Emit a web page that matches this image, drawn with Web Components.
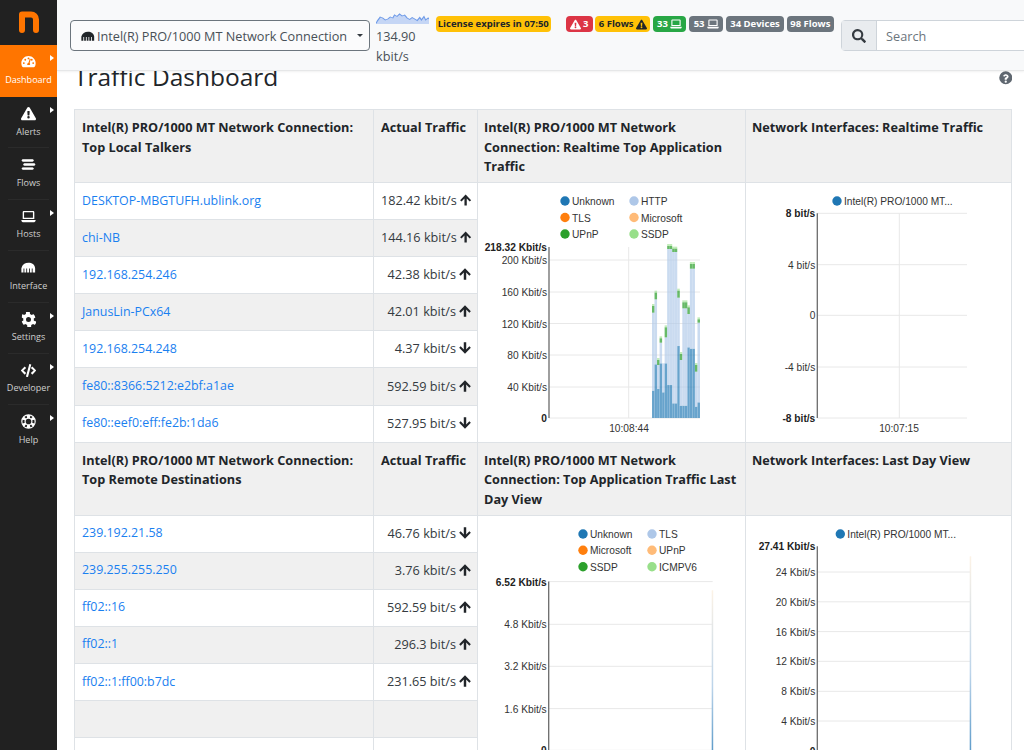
<!DOCTYPE html>
<html>
<head>
<meta charset="utf-8">
<title>Traffic Dashboard</title>
<style>
html, body { margin: 0; height: 100%; overflow: hidden; background: #fff; }
body { font-family: "Open Sans", "Liberation Sans", sans-serif; color: #212529; }
app-shell { height: 750px; }
</style>
</head>
<body>
<app-shell>
  <side-bar slot="side">
    <side-item icon="gauge" label="Dashboard" active arrow></side-item>
    <side-item icon="warn" label="Alerts" arrow></side-item>
    <side-item icon="bars" label="Flows"></side-item>
    <side-item icon="laptop" label="Hosts" arrow></side-item>
    <side-item icon="eth" label="Interface"></side-item>
    <side-item icon="cog" label="Settings" arrow></side-item>
    <side-item icon="code" label="Developer" arrow></side-item>
    <side-item icon="ring" label="Help" arrow></side-item>
  </side-bar>
  <top-bar slot="top"></top-bar>
  <page-title>Traffic Dashboard</page-title>
  <dash-section
    h1="Intel(R) PRO/1000 MT Network Connection: Top Local Talkers"
    h3="Intel(R) PRO/1000 MT Network Connection: Realtime Top Application Traffic"
    h4="Network Interfaces: Realtime Traffic"
    rows="DESKTOP-MBGTUFH.ublink.org|182.42 kbit/s|up;chi-NB|144.16 kbit/s|up;192.168.254.246|42.38 kbit/s|up;JanusLin-PCx64|42.01 kbit/s|up;192.168.254.248|4.37 kbit/s|down;fe80::8366:5212:e2bf:a1ae|592.59 bit/s|up;fe80::eef0:eff:fe2b:1da6|527.95 bit/s|down"
    charts="realtime-apps,realtime-if"></dash-section>
  <dash-section
    h1="Intel(R) PRO/1000 MT Network Connection: Top Remote Destinations"
    h3="Intel(R) PRO/1000 MT Network Connection: Top Application Traffic Last Day View"
    h4="Network Interfaces: Last Day View"
    rows="239.192.21.58|46.76 kbit/s|down;239.255.255.250|3.76 kbit/s|up;ff02::16|592.59 bit/s|up;ff02::1|296.3 bit/s|up;ff02::1:ff00:b7dc|231.65 bit/s|up;||;||"
    charts="day-apps,day-if"></dash-section>
</app-shell>

<script>
// font awesome style glyphs, drawn on a 24 box
const ICONS = {
  gauge: '<path fill-rule="evenodd" d="M12 3C5.6 3 .5 8.2.5 14.6c0 2.2.6 4.2 1.6 5.9.3.4.7.7 1.2.7h17.4c.5 0 .9-.3 1.2-.7 1-1.7 1.6-3.7 1.6-5.900C23.500 8.200 18.400 3 12 3zM4.500 16a1.500 1.500 0 1 1 0-3 1.500 1.500 0 0 1 0 3zm2.300-5.300a1.500 1.500 0 1 1 0-3 1.500 1.500 0 0 1 0 3zM12 5.500a1.500 1.500 0 1 1 0 3 1.500 1.500 0 0 1 0-3zm2 12.200h-4c-.3-2 .6-3.500 2-3.900l1.700-5.600c.2-.6.700-.8 1.200-.7.500.2.800.700.600 1.200l-1.700 5.500c1 1 1.200 2.200.2 3.500zm3.200-7a1.500 1.500 0 1 1 0-3 1.500 1.500 0 0 1 0 3zm2.300 5.300a1.500 1.500 0 1 1 0-3 1.500 1.500 0 0 1 0 3z"/>',
  warn: '<path fill-rule="evenodd" d="M23.700 19.600 13.800 2.500c-.8-1.400-2.800-1.400-3.600 0L.3 19.600C-.5 21 .5 22.700 2.100 22.700h19.800c1.600 0 2.600-1.700 1.800-3.100zM12 16a2 2 0 1 1 0 4 2 2 0 0 1 0-4zm-1.900-7.300c0-.4.300-.7.700-.7h2.400c.4 0 .7.300.7.700l-.4 5.700c0 .3-.3.600-.6.600h-1.800c-.3 0-.6-.3-.6-.6z"/>',
  bars: '<path d="M3 4h15.500c.8 0 1.500.7 1.500 1.500S19.300 7 18.500 7H3c-.8 0-1.500-.7-1.500-1.500S2.200 4 3 4zM5.500 10.500H21c.8 0 1.500.7 1.500 1.500s-.7 1.500-1.500 1.500H5.500C4.700 13.500 4 12.800 4 12s.7-1.500 1.500-1.500zM3 17h15.500c.8 0 1.500.7 1.500 1.500S19.300 20 18.500 20H3c-.8 0-1.500-.7-1.500-1.500S2.200 17 3 17z" stroke="currentColor" stroke-width=".9"/>',
  laptop: '<path fill-rule="evenodd" d="M4.500 3h15c1 0 1.800.8 1.800 1.800V16H2.700V4.800C2.700 3.800 3.500 3 4.500 3zm.4 2.200v8.600h14.200V5.200zM.6 17.500h22.800v1c0 1.400-1.100 2.500-2.500 2.500H3.100C1.700 21 .6 19.900.6 18.500z"/>',
  eth: '<path d="M12 4.500C6.500 4.500 2 7.500 .6 13V20H4V13.500h1.400V20h3V13.500h1.400V20h3V13.500h1.400V20h3V13.500h1.400V20h4V13C22 7.500 17.500 4.500 12 4.500z"/>',
  cog: '<path fill-rule="evenodd" d="M22.500 14.900 20.400 13.700a9.500 9.500 0 0 0 0-3.400l2.100-1.200c.3-.1.400-.4.300-.7a12.400 12.400 0 0 0-2.700-4.700c-.2-.2-.5-.3-.7-.1l-2.100 1.200a9.400 9.400 0 0 0-3-1.700V.7c0-.3-.2-.5-.5-.6a12.500 12.500 0 0 0-5.400 0c-.3.100-.5.300-.5.600v2.400a9.600 9.600 0 0 0-3 1.700L2.800 3.600c-.2-.2-.5-.1-.7.100A12.400 12.400 0 0 0 1.400 8.400c-.1.3 0 .6.300.7l2.100 1.200a9.500 9.500 0 0 0 0 3.400l-2.100 1.200c-.3.100-.4.400-.3.700a12.400 12.400 0 0 0 2.700 4.700c.2.200.5.300.7.100l2.100-1.200a9.400 9.400 0 0 0 3 1.700v2.400c0 .3.200.5.500.6 1.800.4 3.600.4 5.400 0 .3-.1.500-.3.500-.6v-2.400a9.600 9.600 0 0 0 3-1.700l2.100 1.200c.2.200.5.100.7-.1a12.400 12.400 0 0 0 2.700-4.700c.1-.3 0-.6-.3-.7zM12 16a4 4 0 1 1 0-8 4 4 0 0 1 0 8z"/>',
  code: '<path d="M10.600 22.500 8.300 21.800a.5.500 0 0 1-.3-.6L13.200 2c.1-.3.400-.4.600-.3l2.300.6c.3.100.4.400.3.600l-5.200 19.300c-.1.300-.4.400-.6.300zM6.200 18.200l1.700-1.800c.2-.2.200-.5 0-.7L3.800 12l4.100-3.700c.2-.2.200-.5 0-.7L6.200 5.800a.5.500 0 0 0-.7 0L0 11.600c-.2.200-.2.600 0 .8l5.500 5.800c.2.200.5.200.7 0zm12.300 0 5.500-5.800c.2-.2.200-.6 0-.8l-5.500-5.800a.5.500 0 0 0-.7 0l-1.700 1.800c-.2.200-.2.500 0 .7l4.100 3.700-4.100 3.700c-.2.200-.2.500 0 .7l1.700 1.800c.2.200.5.200.7 0z"/>',
  ring: '<path fill-rule="evenodd" d="M12 .4a11.600 11.600 0 1 0 0 23.200A11.600 11.600 0 0 0 12 .4zm6.500 4.200-2.500 2.500a6 6 0 0 0-1.900-1.100l.9-3.300c1.300.4 2.500 1.100 3.500 1.900zM12 7.500a4.500 4.500 0 1 1 0 9 4.500 4.500 0 0 1 0-9zM9 2.700l.9 3.300A6 6 0 0 0 8 7.100L5.500 4.600C6.500 3.800 7.700 3.100 9 2.700zM2.700 9l3.300.9a6 6 0 0 0 0 4.200L2.700 15a10 10 0 0 1 0-6zm2.800 10.400L8 16.900a6 6 0 0 0 1.900 1.100L9 21.300c-1.300-.4-2.500-1.100-3.500-1.900zm9.500 1.900-.9-3.300a6 6 0 0 0 1.900-1.100l2.500 2.500c-1 .8-2.200 1.500-3.500 1.900zm6.300-6.300-3.300-.9a6 6 0 0 0 0-4.200l3.300-.9a10 10 0 0 1 0 6z"/>',
  up: '<path d="M12 2 2 12.400l2.600 2.500 5.300-5.500V22h4.200V9.400l5.300 5.500 2.600-2.500z"/>',
  down: '<path d="M12 22 2 11.600l2.600-2.500 5.300 5.500V2h4.200v12.600l5.300-5.500 2.600 2.500z"/>',
  search: '<path fill-rule="evenodd" d="M23.600 20.700l-4.700-4.700a1.100 1.100 0 0 0-.8-.3h-.8a9.700 9.700 0 1 0-1.700 1.700v.8c0 .3.100.6.300.8l4.700 4.700c.4.400 1.100.4 1.600 0l1.300-1.300c.5-.5.500-1.200.1-1.700zM9.800 15.700a6 6 0 1 1 0-12 6 6 0 0 1 0 12z"/>',
  help: '<path fill-rule="evenodd" d="M12 .4a11.600 11.600 0 1 0 0 23.200A11.600 11.600 0 0 0 12 .4zm0 20.600a2 2 0 1 1 0-4 2 2 0 0 1 0 4zm1.900-6.400v.3c0 .3-.3.600-.6.600h-2.600c-.3 0-.6-.3-.6-.6v-.5c0-1.800 1.300-2.500 2.300-3.100.9-.5 1.400-.8 1.400-1.400 0-.8-1-1.300-1.800-1.300-1 0-1.500.5-2.200 1.300-.2.300-.6.300-.8.100L7.700 9.100c-.2-.2-.3-.5-.1-.8C8.700 6.700 10.100 5.700 12.300 5.700c2.300 0 4.800 1.800 4.800 4.100 0 3.100-3.200 3.200-3.200 4.800z"/>'
};
const icon = (name, size, extra = '') =>
  `<svg width="${size}" height="${size}" viewBox="0 0 24 24" fill="currentColor" ${extra}>${ICONS[name]}</svg>`;

class AppShell extends HTMLElement {
  constructor() {
    super();
    this.attachShadow({mode: "open"}).innerHTML = `
    <style>
      :host { display: grid; grid-template-columns: 57px minmax(0, 1fr); grid-template-rows: 71px 1fr; overflow: hidden; }
      .side { grid-row: 1 / 3; display: block; }
      .top { position: relative; z-index: 2; min-width: 0; overflow: hidden; padding-bottom: 3px; margin-bottom: -3px; }
      main { padding: 0 12px 0 17px; overflow: hidden; min-width: 0; }
    </style>
    <div class="side"><slot name="side"></slot></div>
    <div class="top"><slot name="top"></slot></div>
    <main><slot></slot></main>`;
  }
}

class SideBar extends HTMLElement {
  constructor() {
    super();
    this.attachShadow({mode: "open"}).innerHTML = `
    <style>
      :host { display: block; height: 750px; background: #212121; }
      .logo { height: 45px; display: flex; align-items: flex-start; justify-content: center; padding-top: 11px; box-sizing: border-box; }
    </style>
    <div class="logo">
      <svg width="20" height="22" viewBox="0 0 20 22"><path d="M3 19V3.500h9a5 5 0 0 1 5 5V19" fill="none" stroke="#ff7500" stroke-width="6" stroke-linecap="round" stroke-linejoin="round"/></svg>
    </div>
    <slot></slot>`;
  }
}

class SideItem extends HTMLElement {
  connectedCallback() {
    if (this.shadowRoot) return;
    const on = this.hasAttribute("active");
    this.attachShadow({mode: "open"}).innerHTML = `
    <style>
      :host { display: block; }
      :host(:last-child) a::after { display: none; }
      a { position: relative; display: flex; flex-direction: column; align-items: center; height: ${on ? 52 : 51.4}px; box-sizing: border-box; padding-top: 9px;
          background: ${on ? "#ff7500" : "transparent"}; color: #fff; }
      span { font: 9.050px/14px "Open Sans", sans-serif; color: ${on ? "#fff" : "#cfcfcf"}; margin-top: 3.500px; white-space: nowrap; }
      svg { display: block; }
      i { position: absolute; left: 50px; top: 10px; border-left: 4px solid #fff; border-top: 3.500px solid transparent; border-bottom: 3.500px solid transparent; }
      a::after { content: ""; position: absolute; left: 8px; right: 8px; bottom: 0; height: 1px; background: ${on ? "transparent" : "#2b2b2b"}; }
    </style>
    <a>${icon(this.getAttribute("icon"), 15)}<span>${this.getAttribute("label")}</span>${this.hasAttribute("arrow") ? "<i></i>" : ""}</a>`;
  }
}

class StatusBadge extends HTMLElement {
  constructor() {
    super();
    this.attachShadow({mode: "open"}).innerHTML = `
    <style>
      :host { display: inline-flex; align-items: center; justify-content: center; gap: 2px; height: 16px; border-radius: 4px; box-sizing: border-box;
        font: 700 9.500px/16px "Open Sans", sans-serif; white-space: nowrap;
        background: var(--bg, #6c757d); color: var(--fg, #fff); }
    </style><slot></slot>`;
  }
}

class TopBar extends HTMLElement {
  constructor() {
    super();
    const spark = "M0 23 L2 17 L5 10 L8 12 L11 16 L14 14 L17 10 L20 12 L22 6 L25 9 L28 4 L31 8 L34 6 L37 12 L40 15 L43 11 L46 14 L49 17 L52 11 L54 16 L57 9 L59 16 L62 12 L63 14";
    this.attachShadow({mode: "open"}).innerHTML = `
    <style>
      :host { display: flex; align-items: flex-start; height: 71px; box-sizing: border-box; background: #f8f9fa; border-bottom: 1px solid #e6e7e8; box-shadow: 0 1px 2px rgba(0,0,0,.06); padding-left: 13px; }
      .picker { margin-top: 20px; flex: none; width: 300px; height: 31px; box-sizing: border-box; border: 1px solid #6c757d; border-radius: 4px; background: #fbfbfc; display: flex; align-items: center; padding-left: 10px; gap: 2px; font-size: 12.700px; color: #495057; white-space: nowrap; }
      .picker svg { color: #212529; flex: none; }
      .caret { margin-left: 8px; border-top: 3.500px solid #343a40; border-left: 3.500px solid transparent; border-right: 3.500px solid transparent; }
      .rate { margin-left: 6px; flex: none; width: 59.500px; font-size: 12.700px; line-height: 20px; color: #495057; }
      .rate svg { display: block; margin-top: 12px; margin-bottom: 2px; }
      .badges { margin: 16px 0 0 0; display: flex; gap: 2.600px; flex: none; }
      .gap { margin-left: 12px; }
      .search { margin: 20px 0 0 7px; flex: none; display: flex; height: 31px; width: 240px; box-sizing: border-box; border: 1px solid #ced4da; border-radius: 4px; background: #fff; }
      .search b { width: 34px; background: #e9ecef; border-right: 1px solid #ced4da; display: flex; align-items: center; justify-content: center; color: #343a40; }
      .search span { padding-left: 9px; line-height: 30px; font-size: 12.700px; color: #6c757d; }
    </style>
    <div class="picker">${icon("eth", 14)}<span>Intel(R) PRO/1000 MT Network Connection</span><span class="caret"></span></div>
    <div class="rate">
      <svg width="53" height="12" viewBox="0 0 63 24" preserveAspectRatio="none"><path d="${spark} L63 24 L0 24 Z" fill="#c5d6f5"/><path d="${spark}" fill="none" stroke="#6f9be8" stroke-width="1.500"/></svg>
      134.90<br>kbit/s
    </div>
    <div class="badges">
      <status-badge style="--bg:#ffc107;--fg:#212529;width:115.500px">License expires in 07:50</status-badge>
      <status-badge class="gap" style="--bg:#dc3545;width:27px">${icon("warn", 11)}3</status-badge>
      <status-badge style="--bg:#ffc107;--fg:#212529;width:55px">6 Flows ${icon("warn", 11)}</status-badge>
      <status-badge style="--bg:#28a745;width:33.500px">33 ${icon("laptop", 12)}</status-badge>
      <status-badge style="width:34.500px">53 ${icon("laptop", 12)}</status-badge>
      <status-badge style="width:58px">34 Devices</status-badge>
      <status-badge style="width:47.500px">98 Flows</status-badge>
    </div>
    <div class="search"><b>${icon("search", 14)}</b><span>Search</span></div>`;
  }
}

class PageTitle extends HTMLElement {
  constructor() {
    super();
    this.attachShadow({mode: "open"}).innerHTML = `
    <style>
      :host { display: flex; justify-content: space-between; align-items: center; height: 38px; margin-top: -13px; padding-bottom: 13px; }
      h2 { margin: 0; font: 400 24.500px/38px "Open Sans", sans-serif; color: #212529; }
      svg { color: #5f6770; margin-top: 2px; }
    </style>
    <h2><slot></slot></h2>${icon("help", 13.500)}`;
  }
}

class DashSection extends HTMLElement {
  connectedCallback() {
    if (this.shadowRoot) return;
    const rows = this.getAttribute("rows").split(";").map(r => r.split("|"));
    const charts = this.getAttribute("charts").split(",");
    const cells = rows.map((r, i) => `
      <div class="c1 ${i % 2 ? "alt" : ""}" style="grid-row:${i + 2}"><a>${r[0] || "&nbsp;"}</a></div>
      <div class="c2 ${i % 2 ? "alt" : ""}" style="grid-row:${i + 2}">${r[1] ? r[1] + icon(r[2], 14) : "&nbsp;"}</div>`).join("");
    this.attachShadow({mode: "open"}).innerHTML = `
    <style>
      :host { display: grid; grid-template-columns: 299px 104px 268px 267px; grid-template-rows: 73px repeat(7, 37.100px); font-size: 12.700px; color: #212529; }
      div { box-sizing: border-box; border-top: 1px solid #dee2e6; border-left: 1px solid #dee2e6; }
      .h { background: #f0f0f0; font-weight: 700; line-height: 19.500px; padding: 8px 7px 0; font-size: 12.700px; white-space: normal; }
      .h3 { padding-left: 6px; padding-right: 4px; }
      .c1, .c2 { padding: 0 7px 2px; display: flex; align-items: center; white-space: nowrap; }
      .c1 { grid-column: 1; font-size: 12.400px; }
      .c2 { grid-column: 2; justify-content: flex-end; gap: 2px; color: #343a40; padding-right: 5px; }
      .c2 svg { color: #212529; }
      .alt { background: #f0f0f0; }
      a { color: #1a80f0; }
      .chart { grid-row: 2 / 9; padding: 0; overflow: hidden; }
      .last { border-right: 1px solid #dee2e6; }
    </style>
    <div class="h">${this.getAttribute("h1")}</div>
    <div class="h">Actual Traffic</div>
    <div class="h h3">${this.getAttribute("h3")}</div>
    <div class="h h3 last">${this.getAttribute("h4")}</div>
    ${cells}
    <div class="chart" style="grid-column:3"><traffic-chart kind="${charts[0]}"></traffic-chart></div>
    <div class="chart last" style="grid-column:4"><traffic-chart kind="${charts[1]}"></traffic-chart></div>`;
  }
}

// chart geometry is kept in page coords, the viewBox maps it on to the cell
const PAL = ["#1f77b4", "#aec7e8", "#ff7f0e", "#ffbb78", "#2ca02c", "#98df8a"];
const CHARTS = {
  "realtime-apps": {
    box: [478, 183], legend: [[565, 201, "Unknown", 0], [634, 201, "HTTP", 1], [565, 217.500, "TLS", 2], [634, 217.500, "Microsoft", 3], [565, 234, "UPnP", 4], [634, 234, "SSDP", 5]],
    axisX: 549, right: 700, top: 247,
    ticks: [[247, "218.32 Kbit/s", 1, 1], [260, "200 Kbit/s"], [292, "160 Kbit/s"], [323.500, "120 Kbit/s"], [355, "80 Kbit/s"], [387, "40 Kbit/s"], [418, "0", 1]],
    vx: 628.700, time: "10:08:44", timeX: 629
  },
  "realtime-if": {
    box: [746, 183], legend: [[837, 201, "Intel(R) PRO/1000 MT...", 0]],
    axisX: 817.300, right: 967, top: 213.300,
    ticks: [[213.300, "8 bit/s", 1], [264.700, "4 bit/s"], [315.300, "0"], [367, "-4 bit/s"], [418, "-8 bit/s", 1]],
    vx: 899.300, time: "10:07:15", timeX: 899
  },
  "day-apps": {
    box: [478, 515.700], legend: [[583, 533.700, "Unknown", 0], [652, 533.700, "TLS", 1], [583, 550, "Microsoft", 2], [652, 550, "UPnP", 3], [583, 566.500, "SSDP", 4], [652, 566.500, "ICMPV6", 5]],
    axisX: 548.700, right: 712.700, top: 581.300,
    ticks: [[581.300, "6.52 Kbit/s", 1], [624, "4.8 Kbit/s"], [666, "3.2 Kbit/s"], [708.300, "1.6 Kbit/s"], [750, "0", 1]],
    edge: [590, 750]
  },
  "day-if": {
    box: [746, 515.700], legend: [[840.300, 533.700, "Intel(R) PRO/1000 MT...", 0]],
    axisX: 817.300, right: 970.700, top: 546,
    ticks: [[546, "27.41 Kbit/s", 1, 1], [571.700, "24 Kbit/s"], [601.500, "20 Kbit/s"], [631.300, "16 Kbit/s"], [661, "12 Kbit/s"], [691, "8 Kbit/s"], [720.700, "4 Kbit/s"], [750.700, "0", 1]],
    edge: [556, 750]
  }
};
// blue top, band top, band bottom in the 530,240 crop at 3x
const BARS = [[452,198,218],[373,158,178],[447,360,375],[370,295,308],[457,370,370],[370,262,292],[435,18,27],[435,18,27],[490,26,36],[490,26,36],[318,152,173],[497,342,360],[497,187,205],[497,187,205],[322,202,222],[326,72,86],[326,72,86],[500,375,395],[487,238,248]];

class TrafficChart extends HTMLElement {
  connectedCallback() {
    if (this.shadowRoot) return;
    const id = this.getAttribute("kind"), c = CHARTS[id];
    let s = "";
    c.legend.forEach(l => {
      s += `<circle cx="${l[0]}" cy="${l[1]}" r="4.700" fill="${PAL[l[3]]}"/><text x="${l[0] + 7}" y="${l[1] + 4}">${l[2]}</text>`;
    });
    c.ticks.forEach(t => {
      const y = t[0];
      if (!t[3]) s += `<line x1="${c.axisX}" x2="${c.right}" y1="${y}" y2="${y}" stroke="#e8e8e8"/>`;
      s += `<text x="${c.axisX - 2}" y="${y + 4}" text-anchor="end" ${t[2] ? 'font-weight="700" fill="#222"' : ""}>${t[1]}</text>`;
    });
    if (c.vx) {
      s += `<line x1="${c.vx}" x2="${c.vx}" y1="${c.top}" y2="418" stroke="#e8e8e8"/>`;
      s += `<text x="${c.timeX}" y="432" text-anchor="middle">${c.time}</text>`;
    }
    if (id === "realtime-apps") {
      BARS.forEach((b, i) => {
        const x = 652 + i * 2.526, w = 2.526;
        const Y = v => 240 + v / 3;
        s += `<rect x="${x}" y="${Y(b[0])}" width="${w}" height="${418 - Y(b[0])}" fill="${PAL[0]}" fill-opacity=".68" stroke="#fff" stroke-opacity=".25" stroke-width=".3"/>`;
        s += `<rect x="${x}" y="${Y(b[2])}" width="${w}" height="${Y(b[0]) - Y(b[2])}" fill="${PAL[1]}" fill-opacity=".65"/>`;
        if (b[2] > b[1]) {
          s += `<rect x="${x}" y="${Y(b[1]) - 2}" width="${w}" height="2" fill="${PAL[5]}" fill-opacity=".6"/>`;
          s += `<rect x="${x}" y="${Y(b[1])}" width="${w}" height="${(b[2] - b[1]) / 3}" fill="${PAL[4]}" fill-opacity=".72"/>`;
        }
      });
    }
    if (c.edge) {
      s += `<defs><linearGradient id="f" x1="0" x2="0" y1="0" y2="1"><stop offset="0" stop-color="#fdf3e6"/><stop offset=".6" stop-color="#bcd4ea"/><stop offset="1" stop-color="#5f9cca"/></linearGradient></defs>`;
      s += `<rect x="${c.right - 1}" y="${c.edge[0]}" width="1.500" height="${c.edge[1] - c.edge[0]}" fill="url(#f)"/>`;
    }
    s += `<line x1="${c.axisX}" x2="${c.axisX}" y1="${c.top}" y2="${id.startsWith("day") ? 760 : 418}" stroke="#6b6b6b" stroke-width="1.300"/>`;
    this.attachShadow({mode: "open"}).innerHTML = `
    <style>
      :host { display: block; }
      svg { display: block; font: 10.200px "Liberation Sans", Arial, sans-serif; fill: #333; }
    </style>
    <svg width="268" height="259" viewBox="${c.box[0]} ${c.box[1]} 268 259">${s}</svg>`;
  }
}

customElements.define("app-shell", AppShell);
customElements.define("side-bar", SideBar);
customElements.define("side-item", SideItem);
customElements.define("status-badge", StatusBadge);
customElements.define("top-bar", TopBar);
customElements.define("page-title", PageTitle);
customElements.define("traffic-chart", TrafficChart);
customElements.define("dash-section", DashSection);
</script>
</body>
</html>
